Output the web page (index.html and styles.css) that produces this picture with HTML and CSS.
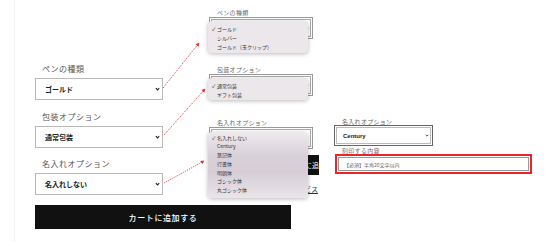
FILE: index.html
```html
<!doctype html>
<html lang="ja">
<head>
    <meta charset="UTF-8">
    <meta name="viewport" content="width=device-width, initial-scale=1.0">
    <title>名入れオプション</title>

    <link rel="stylesheet" href="styles.css">

</head>
<body>
<div class="page">
    <div class="sheet">
        <div class="top">
            <!--商品フォーム-->
            <div class="form-col">
                <div class="field">
                    <div class="label">ペンの種類</div>
                    <div class="select"><span>ゴールド</span><svg class="chev" viewBox="0 0 6 4" width="5" height="4"><path d="M1 1l2 2 2-2" fill="none" stroke="#222" stroke-width="1.4"/></svg></div>
                </div>
                <div class="field">
                    <div class="label">包装オプション</div>
                    <div class="select"><span>通常包装</span><svg class="chev" viewBox="0 0 6 4" width="5" height="4"><path d="M1 1l2 2 2-2" fill="none" stroke="#222" stroke-width="1.4"/></svg></div>
                </div>
                <div class="field">
                    <div class="label">名入れオプション</div>
                    <div class="select"><span>名入れしない</span><svg class="chev" viewBox="0 0 6 4" width="5" height="4"><path d="M1 1l2 2 2-2" fill="none" stroke="#222" stroke-width="1.4"/></svg></div>
                </div>
            </div>

            <!--プルダウンを開いた状態-->
            <div class="mid">
                <div class="shot shot-pen">
                    <div class="mini-label">ペンの種類</div>
                    <div class="mini-box">
                        <svg class="chev" viewBox="0 0 6 4" width="4" height="3"><path d="M1 1l2 2 2-2" fill="none" stroke="#444" stroke-width="1.2"/></svg>
                        <ul class="menu menu-pen">
                            <li><span class="check">✓</span>ゴールド</li>
                            <li><span class="check"></span>シルバー</li>
                            <li><span class="check"></span>ゴールド（玉クリップ）</li>
                            <li><span class="check"></span>シルバー（玉クリップ）</li>
                        </ul>
                    </div>
                </div>
                <div class="shot shot-wrap">
                    <div class="mini-label">包装オプション</div>
                    <div class="mini-box">
                        <svg class="chev" viewBox="0 0 6 4" width="4" height="3"><path d="M1 1l2 2 2-2" fill="none" stroke="#444" stroke-width="1.2"/></svg>
                        <ul class="menu menu-wrap">
                            <li><span class="check">✓</span>通常包装</li>
                            <li><span class="check"></span>ギフト包装</li>
                        </ul>
                    </div>
                </div>
                <div class="shot shot-name">
                    <div class="mini-label">名入れオプション</div>
                    <div class="mini-box">
                        <ul class="menu menu-name">
                            <li><span class="check">✓</span>名入れしない</li>
                            <li><span class="check"></span>Century</li>
                            <li><span class="check"></span>篆記体</li>
                            <li><span class="check"></span>行書体</li>
                            <li><span class="check"></span>明朝体</li>
                            <li><span class="check"></span>ゴシック体</li>
                            <li><span class="check"></span>丸ゴシック体</li>
                        </ul>
                    </div>
                </div>
                <div class="mini-btn">カートに追</div>
                <div class="mini-link"><span>ラッピングサービス</span></div>
            </div>

            <!--名入れを選んだ状態-->
            <div class="right">
                <div class="small-label">名入れオプション</div>
                <div class="select-sm"><span>Century</span><svg class="chev" viewBox="0 0 6 4" width="4" height="3"><path d="M1 1l2 2 2-2" fill="none" stroke="#333" stroke-width="1.3"/></svg></div>
                <div class="small-label engrave">刻印する内容</div>
                <div class="engrave-box">
                    <div class="engrave-input">【必須】半角20文字以内</div>
                </div>
            </div>
        </div>
        <button class="cart">カートに追加する</button>
    </div>

    <svg class="arrows" width="550" height="242" viewBox="0 0 550 242">
        <defs>
            <marker id="head" viewBox="0 0 6 6" refX="5" refY="3" markerWidth="4" markerHeight="4" orient="auto">
                <path d="M0 0L6 3L0 6z" fill="#e8333a"/>
            </marker>
        </defs>
        <path d="M163 88L199 43" marker-end="url(#head)"/>
        <path d="M164 135L205 89" marker-end="url(#head)"/>
        <path d="M164 183L204 161" marker-end="url(#head)"/>
    </svg>
</div>
</body>
</html>
```
FILE: styles.css
```css
body{
    margin: 0;
    background: #fff;
    font-family: "Noto Sans CJK JP", "Noto Sans", sans-serif;
    color: #222;
}
.page{
    position: relative;
    width: 550px;
    height: 242px;
    overflow: hidden;
    padding-left: 14px;
    box-sizing: border-box;
}
.sheet{
    height: 242px;
    border-left: 1px solid #f3f3f3;
    padding-left: 20px;
}
.top{
    display: flex;
    height: 195px;
}

/* left form */
.form-col{
    width: 128px;
    padding-top: 62px;
    display: flex;
    flex-direction: column;
    gap: 9.5px;
}
.label{
    font-size: 8px;
    line-height: 14px;
    letter-spacing: 0.5px;
    color: #555;
    padding-left: 7px;
    margin-bottom: 2px;
}
.select{
    height: 22px;
    box-sizing: border-box;
    border: 1px solid #b8b8b8;
    padding: 0 2px 0 9px;
    display: flex;
    align-items: center;
    justify-content: space-between;
    font-size: 7px;
    font-weight: 600;
    color: #222;
}
.chev{
    display: block;
}
.cart{
    display: block;
    width: 256px;
    height: 24px;
    margin: 10px 0 0;
    padding: 0;
    border: none;
    background: #111;
    color: #fff;
    font-family: inherit;
    font-size: 8px;
    font-weight: 500;
    letter-spacing: 0.6px;
}

/* middle: open dropdowns */
.mid{
    width: 112px;
    margin-left: 45px;
}
.shot-pen{
    margin-top: 9px;
}
.shot-wrap{
    margin-top: 27px;
}
.shot-name{
    margin-top: 23px;
}
.mini-label{
    font-size: 6px;
    line-height: 8px;
    color: #666;
    padding-left: 9px;
    letter-spacing: 0.3px;
}
.mini-box{
    position: relative;
    width: 104px;
    height: 22px;
    margin-left: 1px;
    box-sizing: border-box;
    border: 1px solid #999;
    box-shadow: inset 0 0 0 1px #fff, inset 0 0 0 2px #aaa;
    display: flex;
    align-items: center;
    justify-content: flex-end;
    padding-right: 3px;
}
.menu{
    position: absolute;
    z-index: 2;
    left: -2px;
    top: 3px;
    width: 100px;
    margin: 0;
    padding: 2.5px 0 0;
    list-style: none;
    box-sizing: border-box;
    border-radius: 4px;
    overflow: hidden;
    background: #ebe7eb;
    box-shadow: 0 1px 4px rgba(0,0,0,0.28);
    font-size: 5px;
    line-height: 9px;
    color: #333;
}
.menu li{
    padding-left: 4px;
    white-space: nowrap;
}
.check{
    display: inline-block;
    width: 5px;
    font-size: 5px;
    color: #222;
}
.menu-pen{
    height: 32px;
}
.menu-wrap{
    height: 22px;
}
.menu-name{
    top: 4px;
    height: 66px;
    padding-top: 1.5px;
    line-height: 8.8px;
    background: linear-gradient(180deg, #eeeaee 0%, #d9d1d9 35%, #d6cdd6 60%, #e9e5e9 100%);
}
.mini-btn{
    width: 110px;
    height: 20px;
    margin: 6px 0 0 1px;
    background: #111;
    color: #fff;
    font-size: 7px;
    line-height: 20px;
    text-align: right;
    overflow: hidden;
    white-space: nowrap;
}
.mini-link{
    margin-top: 9px;
    padding-right: 2px;
    text-align: right;
    font-size: 7px;
    line-height: 10px;
    color: #333;
}
.mini-link span{
    text-decoration: underline;
}

/* right: engraving selected */
.right{
    width: 199px;
    margin-left: 14px;
    padding-top: 119px;
}
.small-label{
    font-size: 6px;
    line-height: 6px;
    color: #666;
    padding-left: 8px;
    letter-spacing: 0.3px;
}
.small-label.engrave{
    margin-top: 2px;
    color: #7a6a6a;
}
.select-sm{
    width: 99px;
    height: 21px;
    box-sizing: border-box;
    border: 1px solid #666;
    box-shadow: inset 0 0 0 1px #fff, inset 0 0 0 2px #bbb;
    display: flex;
    align-items: center;
    justify-content: space-between;
    padding: 0 3px 0 8px;
    font-family: "Liberation Sans", Arial, sans-serif;
    font-size: 6px;
    font-weight: bold;
    color: #222;
}
.engrave-box{
    width: 197px;
    height: 20px;
    margin-left: 1px;
    box-sizing: border-box;
    border: 2px solid #e8262a;
    padding: 1px;
}
.engrave-input{
    height: 100%;
    box-sizing: border-box;
    border: 1px solid #9a9a9a;
    padding-left: 5px;
    font-size: 5px;
    line-height: 14px;
    color: #666;
}

/* annotation arrows */
.arrows{
    position: absolute;
    left: 0;
    top: 0;
    pointer-events: none;
}
.arrows path{
    fill: none;
    stroke: #e8333a;
    stroke-width: 1;
    stroke-dasharray: 1 1.2;
}
.arrows marker path{
    fill: #e8333a;
    stroke: none;
}
```
